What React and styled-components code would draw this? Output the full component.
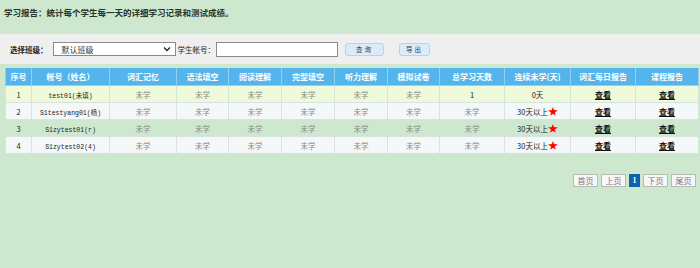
import React from "react";
import styled, { createGlobalStyle } from "styled-components";

const Global = createGlobalStyle`
  html, body { margin: 0; padding: 0; background: #cde8cf; }
  body { font-family: "Noto Sans CJK SC", "Liberation Sans", sans-serif; color: #222; }
`;

const Page = styled.div`
  width: 700px;
  height: 268px;
  background: #cde8cf;
  display: flex;
  flex-direction: column;
`;

const Title = styled.div`
  padding: 6px 0 0 4px;
  height: 28px;
  box-sizing: border-box;
  display: flex;
  align-items: flex-start;
`;

const TitleText = styled.span`
  font-size: 8.5px;
  line-height: 12px;
  font-weight: bold;
  color: #2b332b;
  white-space: nowrap;
`;

const Toolbar = styled.div`
  height: 30px;
  background: #efefef;
  display: flex;
  align-items: center;
  padding: 0 0 0 10px;
  box-sizing: border-box;
  margin-top: 6px;
`;

const Label = styled.span`
  font-size: 7.5px;
  font-weight: ${(p) => (p.$bold ? "bold" : "normal")};
  color: #222;
  margin-right: ${(p) => p.$mr || 0}px;
  white-space: nowrap;
`;

const SelectBox = styled.div`
  width: 123px;
  height: 14px;
  box-sizing: border-box;
  border: 1px solid #8a8a8a;
  background: #fff;
  display: flex;
  align-items: center;
  justify-content: space-between;
  padding: 0 4px 0 8px;
  font-size: 8px;
  color: #333;
  margin-right: 2px;
`;

const TextInput = styled.div`
  width: 122px;
  height: 15px;
  box-sizing: border-box;
  border: 1px solid #8a8a8a;
  background: #fff;
  margin-right: 7px;
`;

const Btn = styled.div`
  width: ${(p) => p.$w}px;
  height: 13px;
  box-sizing: border-box;
  border: 1px solid #b7d2ea;
  border-radius: 3px;
  background: #dcebf8;
  font-size: 6.5px;
  color: #2a3d55;
  display: flex;
  align-items: center;
  justify-content: center;
  letter-spacing: 2px;
  margin-right: ${(p) => p.$mr || 0}px;
`;

const TableWrap = styled.div`
  padding: 4px 2px 0 5px;
`;

const Table = styled.table`
  border-collapse: collapse;
  width: 693px;
  table-layout: fixed;
`;

const Th = styled.th`
  background: #53b5ec;
  color: #fff;
  font-size: 8px;
  font-weight: bold;
  height: 17px;
  padding: 0;
  border: 1px solid #8fd0f3;
  border-top: none;
  text-align: center;
`;

const rowBg = ["#eefad9", "#f4f8f8", "#cde8cf", "#f4f8f8"];

const Tr = styled.tr`
  background: ${(p) => rowBg[p.$i]};
`;

const Td = styled.td`
  height: 16px;
  padding: 0;
  border: 1px solid #d6e3df;
  text-align: center;
  font-size: 7.5px;
  color: ${(p) => (p.$muted ? "#8a8a8a" : "#222")};
  white-space: nowrap;
`;

const Account = styled.span`
  font-family: "Liberation Mono", "Noto Sans CJK SC", monospace;
  font-size: 6.5px;
  color: #222;
`;

const Star = styled.span`
  color: #f00;
  font-size: 10px;
  line-height: 8px;
`;

const ViewLink = styled.a`
  color: #111;
  font-weight: bold;
  text-decoration: underline;
  font-size: 8px;
`;

const Pager = styled.div`
  display: flex;
  justify-content: flex-end;
  gap: 3px;
  padding: 20px 4px 0 0;
`;

const PageBtn = styled.div`
  height: 13px;
  width: ${(p) => (p.$active ? 11 : 25)}px;
  box-sizing: border-box;
  border: 1px solid ${(p) => (p.$active ? "#0b63ae" : "#b9b9b9")};
  background: ${(p) => (p.$active ? "#0b63ae" : "#f7f7f7")};
  color: ${(p) => (p.$active ? "#fff" : "#777")};
  font-family: "Liberation Serif", "Noto Sans CJK SC", serif;
  font-weight: ${(p) => (p.$active ? "bold" : "normal")};
  font-size: 8px;
  display: flex;
  align-items: center;
  justify-content: center;
`;

const cols = [26, 78, 67, 52, 53, 53, 53, 52, 65, 66, 65, 63];
const heads = ["序号", "帐号（姓名）", "词汇记忆", "语法填空", "阅读理解", "完型填空", "听力理解", "模拟试卷", "总学习天数", "连续未学(天)", "词汇每日报告", "课程报告"];
const rows = [
  { n: "1", acc: "test01(未填)", total: "1", streak: "0天", star: false },
  { n: "2", acc: "S1testyang01(杨)", total: null, streak: "30天以上", star: true },
  { n: "3", acc: "S1zytest01(r)", total: null, streak: "30天以上", star: true },
  { n: "4", acc: "S1zytest02(4)", total: null, streak: "30天以上", star: true },
];

const Chevron = () => (
  <svg width="8" height="6" viewBox="0 0 8 6">
    <path d="M1 1.5 L4 4.5 L7 1.5" fill="none" stroke="#222" strokeWidth="1.3" />
  </svg>
);

export default function App() {
  return (
    <Page>
      <Global />
      <Title>
        <TitleText>学习报告：统计每个学生每一天的详细学习记录和测试成绩。</TitleText>
      </Title>
      <Toolbar>
        <Label $bold $mr={5}>选择班级：</Label>
        <SelectBox>
          <span>默认班级</span>
          <Chevron />
        </SelectBox>
        <Label $mr={1}>学生帐号：</Label>
        <TextInput />
        <Btn $w={39} $mr={15}>查询</Btn>
        <Btn $w={31}>导出</Btn>
      </Toolbar>
      <TableWrap>
        <Table>
          <colgroup>
            {cols.map((w, i) => (
              <col key={i} style={{ width: w }} />
            ))}
          </colgroup>
          <thead>
            <tr>
              {heads.map((h) => (
                <Th key={h}>{h}</Th>
              ))}
            </tr>
          </thead>
          <tbody>
            {rows.map((r, i) => (
              <Tr key={r.n} $i={i}>
                <Td>{r.n}</Td>
                <Td><Account>{r.acc}</Account></Td>
                {[0, 1, 2, 3, 4, 5].map((k) => (
                  <Td key={k} $muted>未学</Td>
                ))}
                {r.total ? <Td>{r.total}</Td> : <Td $muted>未学</Td>}
                <Td>
                  {r.streak}
                  {r.star && <Star>★</Star>}
                </Td>
                <Td><ViewLink>查看</ViewLink></Td>
                <Td><ViewLink>查看</ViewLink></Td>
              </Tr>
            ))}
          </tbody>
        </Table>
      </TableWrap>
      <Pager>
        <PageBtn>首页</PageBtn>
        <PageBtn>上页</PageBtn>
        <PageBtn $active>1</PageBtn>
        <PageBtn>下页</PageBtn>
        <PageBtn>尾页</PageBtn>
      </Pager>
    </Page>
  );
}
